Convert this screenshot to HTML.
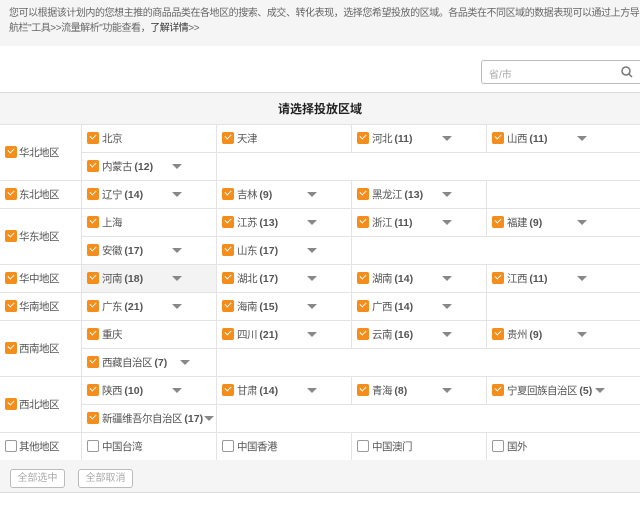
<!DOCTYPE html>
<html><head><meta charset="utf-8"><style>
*{margin:0;padding:0;box-sizing:border-box}
body{width:640px;height:508px;background:#fff;font-family:"Liberation Sans","Noto Sans CJK SC",sans-serif;font-size:10.5px;color:#555;position:relative;overflow:hidden}
.tip{position:absolute;left:0;top:0;width:640px;height:46px;background:#f5f5f5;padding:6px 9px;line-height:15px;font-size:10px;letter-spacing:-0.45px;color:#666;white-space:nowrap}
.tip b{color:#333;font-weight:normal}
.search{position:absolute;left:481px;top:60px;width:165px;height:24px;border:1px solid #bbb;border-radius:3px;color:#aaa;padding:5px 7px;font-size:10px}
.hd{position:absolute;left:0;top:92px;width:640px;height:32px;background:#f5f5f5;border-top:1px solid #ddd;text-align:center;font-weight:bold;color:#222;font-size:12px;line-height:32px}
.hl{position:absolute;height:1px;background:#e3e3e3;right:0}
.vl{position:absolute;width:1px;background:#e3e3e3}
.c{position:absolute;height:28px;line-height:28px;white-space:nowrap;letter-spacing:-0.5px}
.cb{position:absolute;top:8px;width:12px;height:12px;border-radius:2px;background:#f38d1c}
.cb::after{content:"";position:absolute;left:3px;top:2px;width:5px;height:3px;border-left:1.5px solid #fff;border-bottom:1.5px solid #fff;transform:rotate(-45deg)}
.ub{position:absolute;top:8px;width:12px;height:12px;border-radius:2px;border:1px solid #999;background:#fff}
.t{position:absolute;top:1px}
.t i{font-style:normal;font-weight:bold;color:#555;letter-spacing:0}
.ar{position:absolute;top:12px;width:0;height:0;border-left:5px solid transparent;border-right:5px solid transparent;border-top:5px solid #888}
.btns{position:absolute;left:0;top:460px;width:640px;height:33px;background:#f5f5f5;border-bottom:1px solid #ddd}
.btn{position:absolute;top:9px;height:19px;border:1px solid #bbb;border-radius:3px;background:#fff;color:#aaa;font-size:10px;line-height:17px;text-align:center;width:55px}
</style></head><body>
<div class="tip">您可以根据该计划内的您想主推的商品品类在各地区的搜索、成交、转化表现，选择您希望投放的区域。各品类在不同区域的数据表现可以通过上方导<br>航栏"工具&gt;&gt;流量解析"功能查看，<b>了解详情</b>&gt;&gt;</div>
<div class="search">省/市<svg style="position:absolute;right:12px;top:5px" width="12" height="12" viewBox="0 0 12 12"><circle cx="5" cy="5" r="4" fill="none" stroke="#777" stroke-width="1.5"/><line x1="8" y1="8" x2="11" y2="11" stroke="#777" stroke-width="1.5"/></svg></div>
<div class="hd">请选择投放区域</div>
<div style="position:absolute;left:81px;top:264px;width:135px;height:28px;background:#f3f3f3"></div>

<div class="hl" style="left:0;top:124px"></div>
<div class="hl" style="left:81px;top:152px"></div>
<div class="hl" style="left:0;top:180px"></div>
<div class="hl" style="left:0;top:208px"></div>
<div class="hl" style="left:81px;top:236px"></div>
<div class="hl" style="left:0;top:264px"></div>
<div class="hl" style="left:0;top:292px"></div>
<div class="hl" style="left:0;top:320px"></div>
<div class="hl" style="left:81px;top:348px"></div>
<div class="hl" style="left:0;top:376px"></div>
<div class="hl" style="left:81px;top:404px"></div>
<div class="hl" style="left:0;top:432px"></div>
<div class="hl" style="left:0;top:460px"></div>
<div class="vl" style="left:81px;top:124px;height:336px"></div>
<div class="vl" style="left:216px;top:124px;height:28px"></div><div class="vl" style="left:351px;top:124px;height:28px"></div><div class="vl" style="left:486px;top:124px;height:28px"></div>
<div class="vl" style="left:216px;top:152px;height:28px"></div>
<div class="vl" style="left:216px;top:180px;height:28px"></div><div class="vl" style="left:351px;top:180px;height:28px"></div><div class="vl" style="left:486px;top:180px;height:28px"></div>
<div class="vl" style="left:216px;top:208px;height:28px"></div><div class="vl" style="left:351px;top:208px;height:28px"></div><div class="vl" style="left:486px;top:208px;height:28px"></div>
<div class="vl" style="left:216px;top:236px;height:28px"></div><div class="vl" style="left:351px;top:236px;height:28px"></div>
<div class="vl" style="left:216px;top:264px;height:28px"></div><div class="vl" style="left:351px;top:264px;height:28px"></div><div class="vl" style="left:486px;top:264px;height:28px"></div>
<div class="vl" style="left:216px;top:292px;height:28px"></div><div class="vl" style="left:351px;top:292px;height:28px"></div><div class="vl" style="left:486px;top:292px;height:28px"></div>
<div class="vl" style="left:216px;top:320px;height:28px"></div><div class="vl" style="left:351px;top:320px;height:28px"></div><div class="vl" style="left:486px;top:320px;height:28px"></div>
<div class="vl" style="left:216px;top:348px;height:28px"></div>
<div class="vl" style="left:216px;top:376px;height:28px"></div><div class="vl" style="left:351px;top:376px;height:28px"></div><div class="vl" style="left:486px;top:376px;height:28px"></div>
<div class="vl" style="left:216px;top:404px;height:28px"></div>
<div class="vl" style="left:216px;top:432px;height:28px"></div><div class="vl" style="left:351px;top:432px;height:28px"></div><div class="vl" style="left:486px;top:432px;height:28px"></div>

<div class="c" style="left:0;top:138px"><span class="cb" style="left:5px"></span><span class="t" style="left:19px">华北地区</span></div>
<div class="c" style="left:0;top:180px"><span class="cb" style="left:5px"></span><span class="t" style="left:19px">东北地区</span></div>
<div class="c" style="left:0;top:222px"><span class="cb" style="left:5px"></span><span class="t" style="left:19px">华东地区</span></div>
<div class="c" style="left:0;top:264px"><span class="cb" style="left:5px"></span><span class="t" style="left:19px">华中地区</span></div>
<div class="c" style="left:0;top:292px"><span class="cb" style="left:5px"></span><span class="t" style="left:19px">华南地区</span></div>
<div class="c" style="left:0;top:334px"><span class="cb" style="left:5px"></span><span class="t" style="left:19px">西南地区</span></div>
<div class="c" style="left:0;top:390px"><span class="cb" style="left:5px"></span><span class="t" style="left:19px">西北地区</span></div>
<div class="c" style="left:0;top:432px"><span class="ub" style="left:5px"></span><span class="t" style="left:19px">其他地区</span></div>

<div class="c" style="left:81px;top:124px"><span class="cb" style="left:6px"></span><span class="t" style="left:21px">北京</span></div>
<div class="c" style="left:216px;top:124px"><span class="cb" style="left:6px"></span><span class="t" style="left:21px">天津</span></div>
<div class="c" style="left:351px;top:124px"><span class="cb" style="left:6px"></span><span class="t" style="left:21px">河北 <i>(11)</i></span><span class="ar" style="left:91px"></span></div>
<div class="c" style="left:486px;top:124px"><span class="cb" style="left:6px"></span><span class="t" style="left:21px">山西 <i>(11)</i></span><span class="ar" style="left:91px"></span></div>
<div class="c" style="left:81px;top:152px"><span class="cb" style="left:6px"></span><span class="t" style="left:21px">内蒙古 <i>(12)</i></span><span class="ar" style="left:91px"></span></div>

<div class="c" style="left:81px;top:180px"><span class="cb" style="left:6px"></span><span class="t" style="left:21px">辽宁 <i>(14)</i></span><span class="ar" style="left:91px"></span></div>
<div class="c" style="left:216px;top:180px"><span class="cb" style="left:6px"></span><span class="t" style="left:21px">吉林 <i>(9)</i></span><span class="ar" style="left:91px"></span></div>
<div class="c" style="left:351px;top:180px"><span class="cb" style="left:6px"></span><span class="t" style="left:21px">黑龙江 <i>(13)</i></span><span class="ar" style="left:91px"></span></div>

<div class="c" style="left:81px;top:208px"><span class="cb" style="left:6px"></span><span class="t" style="left:21px">上海</span></div>
<div class="c" style="left:216px;top:208px"><span class="cb" style="left:6px"></span><span class="t" style="left:21px">江苏 <i>(13)</i></span><span class="ar" style="left:91px"></span></div>
<div class="c" style="left:351px;top:208px"><span class="cb" style="left:6px"></span><span class="t" style="left:21px">浙江 <i>(11)</i></span><span class="ar" style="left:91px"></span></div>
<div class="c" style="left:486px;top:208px"><span class="cb" style="left:6px"></span><span class="t" style="left:21px">福建 <i>(9)</i></span><span class="ar" style="left:91px"></span></div>
<div class="c" style="left:81px;top:236px"><span class="cb" style="left:6px"></span><span class="t" style="left:21px">安徽 <i>(17)</i></span><span class="ar" style="left:91px"></span></div>
<div class="c" style="left:216px;top:236px"><span class="cb" style="left:6px"></span><span class="t" style="left:21px">山东 <i>(17)</i></span><span class="ar" style="left:91px"></span></div>

<div class="c" style="left:81px;top:264px"><span class="cb" style="left:6px"></span><span class="t" style="left:21px">河南 <i>(18)</i></span><span class="ar" style="left:91px"></span></div>
<div class="c" style="left:216px;top:264px"><span class="cb" style="left:6px"></span><span class="t" style="left:21px">湖北 <i>(17)</i></span><span class="ar" style="left:91px"></span></div>
<div class="c" style="left:351px;top:264px"><span class="cb" style="left:6px"></span><span class="t" style="left:21px">湖南 <i>(14)</i></span><span class="ar" style="left:91px"></span></div>
<div class="c" style="left:486px;top:264px"><span class="cb" style="left:6px"></span><span class="t" style="left:21px">江西 <i>(11)</i></span><span class="ar" style="left:91px"></span></div>

<div class="c" style="left:81px;top:292px"><span class="cb" style="left:6px"></span><span class="t" style="left:21px">广东 <i>(21)</i></span><span class="ar" style="left:91px"></span></div>
<div class="c" style="left:216px;top:292px"><span class="cb" style="left:6px"></span><span class="t" style="left:21px">海南 <i>(15)</i></span><span class="ar" style="left:91px"></span></div>
<div class="c" style="left:351px;top:292px"><span class="cb" style="left:6px"></span><span class="t" style="left:21px">广西 <i>(14)</i></span><span class="ar" style="left:91px"></span></div>

<div class="c" style="left:81px;top:320px"><span class="cb" style="left:6px"></span><span class="t" style="left:21px">重庆</span></div>
<div class="c" style="left:216px;top:320px"><span class="cb" style="left:6px"></span><span class="t" style="left:21px">四川 <i>(21)</i></span><span class="ar" style="left:91px"></span></div>
<div class="c" style="left:351px;top:320px"><span class="cb" style="left:6px"></span><span class="t" style="left:21px">云南 <i>(16)</i></span><span class="ar" style="left:91px"></span></div>
<div class="c" style="left:486px;top:320px"><span class="cb" style="left:6px"></span><span class="t" style="left:21px">贵州 <i>(9)</i></span><span class="ar" style="left:91px"></span></div>
<div class="c" style="left:81px;top:348px"><span class="cb" style="left:6px"></span><span class="t" style="left:21px">西藏自治区 <i>(7)</i></span><span class="ar" style="left:99px"></span></div>

<div class="c" style="left:81px;top:376px"><span class="cb" style="left:6px"></span><span class="t" style="left:21px">陕西 <i>(10)</i></span><span class="ar" style="left:91px"></span></div>
<div class="c" style="left:216px;top:376px"><span class="cb" style="left:6px"></span><span class="t" style="left:21px">甘肃 <i>(14)</i></span><span class="ar" style="left:91px"></span></div>
<div class="c" style="left:351px;top:376px"><span class="cb" style="left:6px"></span><span class="t" style="left:21px">青海 <i>(8)</i></span><span class="ar" style="left:91px"></span></div>
<div class="c" style="left:486px;top:376px"><span class="cb" style="left:6px"></span><span class="t" style="left:21px">宁夏回族自治区 <i>(5)</i></span><span class="ar" style="left:109px"></span></div>
<div class="c" style="left:81px;top:404px"><span class="cb" style="left:6px"></span><span class="t" style="left:21px">新疆维吾尔自治区 <i>(17)</i></span><span class="ar" style="left:123px"></span></div>

<div class="c" style="left:81px;top:432px"><span class="ub" style="left:6px"></span><span class="t" style="left:21px">中国台湾</span></div>
<div class="c" style="left:216px;top:432px"><span class="ub" style="left:6px"></span><span class="t" style="left:21px">中国香港</span></div>
<div class="c" style="left:351px;top:432px"><span class="ub" style="left:6px"></span><span class="t" style="left:21px">中国澳门</span></div>
<div class="c" style="left:486px;top:432px"><span class="ub" style="left:6px"></span><span class="t" style="left:21px">国外</span></div>

<div class="btns"><div class="btn" style="left:10px">全部选中</div><div class="btn" style="left:78px">全部取消</div></div>
</body></html>
